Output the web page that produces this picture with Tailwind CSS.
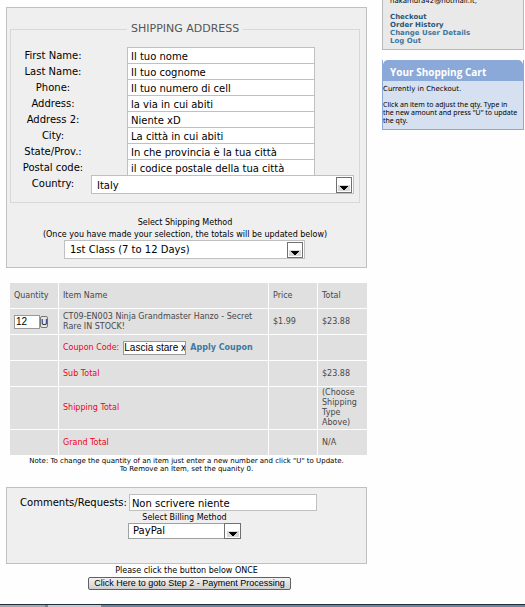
<!DOCTYPE html>
<html lang="en">
<head>
<meta charset="utf-8">
<meta name="viewport" content="width=device-width, initial-scale=1">
<title>Checkout</title>
<script src="https://cdn.jsdelivr.net/npm/@tailwindcss/browser@4"></script>
</head>
<body class="min-h-screen flex flex-col bg-[#fefefe] text-black font-['DejaVu_Sans',Verdana,sans-serif]">
<div class="flex items-start gap-[15px] pl-[6px] pr-px">
  <main class="flex-1 min-w-0 pt-[7px] text-[8px] leading-[12px] text-center">
    <section class="border border-[#c0c0c0] bg-[#efefef] pl-[3px] pr-[6px] pt-[14px] pb-[8px]">
      <fieldset class="border border-[#d8d8d8] pl-[5px] pr-[5px] pb-[8px] text-[10px] leading-[16px] text-left">
        <legend class="ml-[111px] px-[4px] text-[11px] leading-[14px] text-[#555]">SHIPPING ADDRESS</legend>
        <div class="pt-[11px]">
          <div class="flex h-[16px]"><label for="first" class="w-[74px] mr-[37px] text-center whitespace-nowrap leading-[18px]">First Name:</label><input id="first" value="Il tuo nome" class="w-[188px] h-[17px] pt-[2px] px-[3px] border border-[#c0c0c0] bg-white"></div>
          <div class="flex h-[16px]"><label for="last" class="w-[74px] mr-[37px] text-center whitespace-nowrap leading-[18px]">Last Name:</label><input id="last" value="Il tuo cognome" class="w-[188px] h-[17px] pt-[2px] px-[3px] border border-[#c0c0c0] bg-white"></div>
          <div class="flex h-[16px]"><label for="phone" class="w-[74px] mr-[37px] text-center whitespace-nowrap leading-[18px]">Phone:</label><input id="phone" value="Il tuo numero di cell" class="w-[188px] h-[17px] pt-[2px] px-[3px] border border-[#c0c0c0] bg-white"></div>
          <div class="flex h-[16px]"><label for="addr" class="w-[74px] mr-[37px] text-center whitespace-nowrap leading-[18px]">Address:</label><input id="addr" value="la via in cui abiti" class="w-[188px] h-[17px] pt-[2px] px-[3px] border border-[#c0c0c0] bg-white"></div>
          <div class="flex h-[16px]"><label for="addr2" class="w-[74px] mr-[37px] text-center whitespace-nowrap leading-[18px]">Address 2:</label><input id="addr2" value="Niente xD" class="w-[188px] h-[17px] pt-[2px] px-[3px] border border-[#c0c0c0] bg-white"></div>
          <div class="flex h-[16px]"><label for="city" class="w-[74px] mr-[37px] text-center whitespace-nowrap leading-[18px]">City:</label><input id="city" value="La città in cui abiti" class="w-[188px] h-[17px] pt-[2px] px-[3px] border border-[#c0c0c0] bg-white"></div>
          <div class="flex h-[16px]"><label for="state" class="w-[74px] mr-[37px] text-center whitespace-nowrap leading-[18px]">State/Prov.:</label><input id="state" value="In che provincia è la tua città" class="w-[188px] h-[17px] pt-[2px] px-[3px] border border-[#c0c0c0] bg-white"></div>
          <div class="flex h-[16px]"><label for="zip" class="w-[74px] mr-[37px] text-center whitespace-nowrap leading-[18px]">Postal code:</label><input id="zip" value="il codice postale della tua città" class="w-[188px] h-[17px] pt-[2px] px-[3px] border border-[#c0c0c0] bg-white"></div>
          <div class="flex"><label for="country" class="w-[74px] mr-px text-center leading-[18px]">Country:</label>
            <div class="relative flex-1">
              <select id="country" class="appearance-none block w-full h-[19px] pl-[5px] pt-[2px] border border-[#c0c0c0] bg-white"><option>Italy</option></select>
              <span class="pointer-events-none absolute right-[2px] top-[2px] size-[16px] border border-[#707070] bg-white p-px"><svg viewBox="0 0 12 12" class="block size-[12px]"><path d="M0 6h12v6H0z" fill="#d8d8d8"/><path d="M2 7h8v1H9v1H8v1H7v1H5v-1H4V9H3V8H2z"/></svg></span>
            </div>
          </div>
        </div>
      </fieldset>
      <label for="ship" class="block pt-[14px]">Select Shipping Method<br>(Once you have made your selection, the totals will be updated below)</label>
      <div class="relative -mt-px w-[241px] ml-[54px] text-[10px]">
        <select id="ship" class="appearance-none block w-full h-[19px] pl-[5px] border border-[#c0c0c0] bg-white"><option>1st Class (7 to 12 Days)</option></select>
        <span class="pointer-events-none absolute right-[2px] top-[2px] size-[16px] border border-[#707070] bg-white p-px"><svg viewBox="0 0 12 12" class="block size-[12px]"><path d="M0 6h12v6H0z" fill="#d8d8d8"/><path d="M2 7h8v1H9v1H8v1H7v1H5v-1H4V9H3V8H2z"/></svg></span>
      </div>
    </section>

    <div class="pl-[3px] pt-[14px] -mr-px">
    <table class="w-full table-fixed border-separate border-spacing-px text-left text-[8px] leading-[10px] text-[#484848]">
      <colgroup><col class="w-[48px]"><col><col class="w-[48px]"><col class="w-[49px]"></colgroup>
      <thead><tr class="h-[25px] *:bg-[#e0e0e0] *:px-[4px] *:font-normal"><th>Quantity</th><th>Item Name</th><th>Price</th><th>Total</th></tr></thead>
      <tbody>
        <tr class="h-[25px] *:bg-[#e0e0e0] *:px-[4px]"><td><div class="flex items-center font-['Liberation_Sans',Arial,sans-serif] text-black"><input aria-label="Quantity" value="12" class="w-[26px] h-[14px] px-px text-[10px] border border-[#999] bg-white"><button aria-label="Update quantity" class="w-[8px] h-[12px] border border-[#777] rounded-[2px] bg-[#e6e6e6] text-[9px] leading-[10px]">U</button></div></td><td>CT09-EN003 Ninja Grandmaster Hanzo - Secret Rare IN STOCK!</td><td>$1.99</td><td>$23.88</td></tr>
        <tr class="h-[25px] *:bg-[#e0e0e0] *:px-[4px]"><td></td><td><div class="flex items-center gap-[4px] whitespace-nowrap"><label for="coupon" class="text-[#f00018]">Coupon Code:</label><input id="coupon" value="Lascia stare xD" class="w-[63px] h-[14px] border border-[#999] bg-white font-['Liberation_Sans',Arial,sans-serif] text-[10px] text-black"><a href="#" class="font-bold text-[#4078a0]">Apply Coupon</a></div></td><td></td><td></td></tr>
        <tr class="h-[25px] *:bg-[#e0e0e0] *:px-[4px]"><td></td><td class="text-[#f00018]">Sub Total</td><td></td><td>$23.88</td></tr>
        <tr class="h-[42px] *:bg-[#e0e0e0] *:px-[4px]"><td></td><td class="text-[#f00018]">Shipping Total</td><td></td><td>(Choose Shipping Type Above)</td></tr>
        <tr class="h-[25px] *:bg-[#e0e0e0] *:px-[4px]"><td></td><td class="text-[#f00018]">Grand Total</td><td></td><td>N/A</td></tr>
      </tbody>
    </table>
    </div>
    <p class="pt-px text-[7px] leading-[8px]">Note: To change the quantity of an item just enter a new number and click "U" to Update.<br>To Remove an Item, set the quanity 0.</p>

    <section class="mt-[14px] min-h-[77px] border border-[#c0c0c0] bg-[#efefef] pt-[6px]">
      <div class="flex justify-center gap-[2px] pr-[36px] text-[10px]">
        <label for="comments" class="leading-[18px]">Comments/Requests:</label>
        <input id="comments" value="Non scrivere niente" class="w-[188px] h-[17px] pt-[2px] px-[2px] border border-[#c0c0c0] bg-white">
      </div>
      <label for="billing" class="block pr-[4px] leading-[11px]">Select Billing Method</label>
      <div class="pr-[4px]">
      <div class="relative mx-auto w-[113px] text-[10px] text-left">
        <select id="billing" class="appearance-none block w-full h-[16px] pl-[4px] border border-[#a0a0a0] bg-white"><option>PayPal</option></select>
        <span class="pointer-events-none absolute right-0 top-0 w-[17px] h-[16px] border border-[#707070] bg-white p-px"><svg viewBox="0 0 12 12" class="block mx-auto size-[12px]"><path d="M0 6h12v6H0z" fill="#d8d8d8"/><path d="M2 7h8v1H9v1H8v1H7v1H5v-1H4V9H3V8H2z"/></svg></span>
      </div>
      </div>
    </section>
    <p class="pt-px">Please click the button below ONCE</p>
    <button class="block w-[203px] h-[13px] ml-[82px] border border-[#606060] rounded-[2px] bg-linear-to-b from-[#f2f2f2] to-[#cfcfcf] whitespace-nowrap font-['Liberation_Sans',Arial,sans-serif] text-[9px] leading-[11px]">Click Here to goto Step 2 - Payment Processing</button>
  </main>

  <aside class="w-[142px] text-[7px] leading-[8px]">
    <div class="overflow-hidden border border-t-0 border-[#b8b8b8] bg-[#e9e9e9] pl-[7px] pb-[4px]">
      <p class="-mt-[3px]">nakamura42@hotmail.it,</p>
      <nav class="mt-[8px] flex flex-col items-start font-bold text-[#4078a0]">
        <a href="#" class="text-[#285878]">Checkout</a><a href="#" class="text-[#285878]">Order History</a><a href="#">Change User Details</a><a href="#">Log Out</a>
      </nav>
    </div>
    <section class="mt-[10px] border border-t-0 border-[#8aa9d8] bg-linear-to-b from-white from-[6px] to-[#d5e0f0] to-[6px] pb-[4px]">
      <h2 class="h-[21px] pt-[2px] pl-[7px] rounded-t-[5px] bg-[#8aa9d8] font-['Open_Sans',sans-serif] text-[10px] leading-[20px] font-bold text-white">Your Shopping Cart</h2>
      <p class="pt-[4px]">Currently in Checkout.</p>
      <p class="pt-[8px] font-['Noto_Sans',sans-serif]">Click an item to adjust the qty. Type in<br>the new amount and press "U" to update<br>the qty.</p>
    </section>
  </aside>
</div>
<footer class="mt-auto h-[3px] border-t border-[#20303c] bg-[#71869a] flex gap-[3px]">
  <span class="w-[45px] bg-[#a4a8b0]"></span><span class="w-[53px] bg-[#c4cad4]"></span>
</footer>
</body>
</html>
